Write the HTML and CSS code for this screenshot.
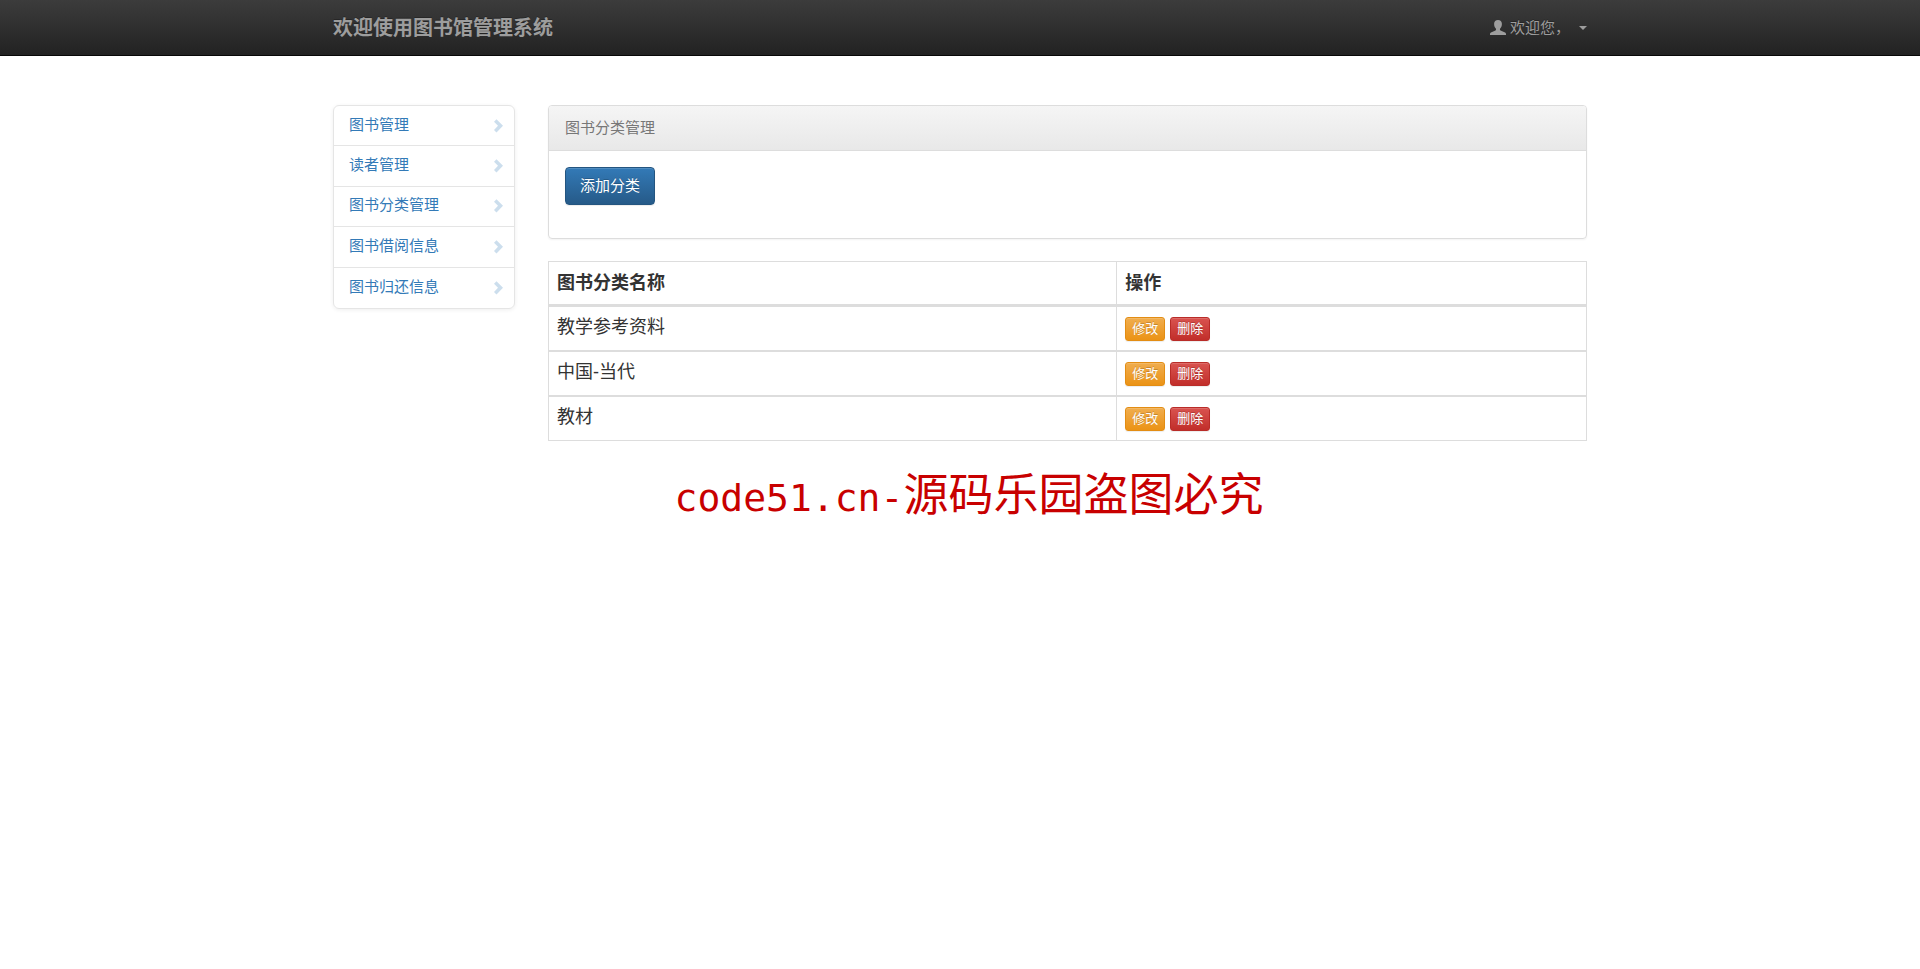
FILE: index.html
```html
<!DOCTYPE html>
<html lang="zh-CN">
<head>
<meta charset="utf-8">
<meta name="viewport" content="width=device-width, initial-scale=1">
<title>图书分类管理</title>
<link rel="stylesheet" href="styles.css">
</head>
<body>
<svg class="sprite" aria-hidden="true">
  <symbol id="chevron" viewBox="0 0 9 14"><path d="M2.5 0.2 9 6.8 2.5 13.4 0 10.9 4 6.8 0 2.7z"/></symbol>
</svg>
<header class="navbar">
  <div class="container navbar-inner">
    <a class="brand" href="#">欢迎使用图书馆管理系统</a>
    <button class="user-menu" type="button" aria-haspopup="true">
      <svg class="user-icon" viewBox="0 0 16 15" aria-hidden="true"><path d="M8 0C5.600 0 4.100 1.500 4.100 3.800c0 1.900.5 3.600 1.700 4.700.4.400.4 1.500-.3 1.900L1.500 12.200C.6 12.600 0 13.200 0 14v1h16v-1c0-.8-.6-1.400-1.500-1.800l-4-1.800c-.7-.4-.7-1.500-.3-1.900 1.200-1.100 1.700-2.800 1.700-4.700C11.900 1.500 10.400 0 8 0z"/></svg>
      <span>欢迎您，</span>
      <span class="caret"></span>
    </button>
  </div>
</header>
<div class="container layout">
  <nav class="side-nav">
    <a href="#"><span class="label">图书管理</span><svg class="chevron" aria-hidden="true"><use href="#chevron"/></svg></a>
    <a href="#"><span class="label">读者管理</span><svg class="chevron" aria-hidden="true"><use href="#chevron"/></svg></a>
    <a href="#"><span class="label">图书分类管理</span><svg class="chevron" aria-hidden="true"><use href="#chevron"/></svg></a>
    <a href="#"><span class="label">图书借阅信息</span><svg class="chevron" aria-hidden="true"><use href="#chevron"/></svg></a>
    <a href="#"><span class="label">图书归还信息</span><svg class="chevron" aria-hidden="true"><use href="#chevron"/></svg></a>
  </nav>
  <main class="main">
    <section class="panel">
      <div class="panel-heading">图书分类管理</div>
      <div class="panel-body"><button class="btn btn-primary" type="button">添加分类</button></div>
    </section>
    <table class="table">
      <thead>
        <tr><th class="name-col" scope="col">图书分类名称</th><th scope="col">操作</th></tr>
      </thead>
      <tbody>
        <tr><td>教学参考资料</td><td><div class="actions"><button class="btn btn-small btn-warning" type="button">修改</button><button class="btn btn-small btn-danger" type="button">删除</button></div></td></tr>
        <tr><td>中国-当代</td><td><div class="actions"><button class="btn btn-small btn-warning" type="button">修改</button><button class="btn btn-small btn-danger" type="button">删除</button></div></td></tr>
        <tr><td>教材</td><td><div class="actions"><button class="btn btn-small btn-warning" type="button">修改</button><button class="btn btn-small btn-danger" type="button">删除</button></div></td></tr>
      </tbody>
    </table>
  </main>
</div>
<p class="notice"><span class="notice-site">code51.cn-</span>源码乐园盗图必究</p>
</body>
</html>
```

FILE: styles.css
```css
* { box-sizing: border-box; }

body {
  margin: 0;
  background: #fff;
  color: #333;
  font-family: "Liberation Sans", "Noto Sans CJK SC", sans-serif;
  font-size: 15px;
  line-height: 22px;
}

button { font-family: inherit; }

.sprite { display: none; }

.container {
  max-width: 1254px;
  margin: 0 auto;
}

.navbar {
  background: linear-gradient(#3c3c3c, #222);
  border-bottom: 1px solid #080808;
}

.navbar-inner {
  display: flex;
  align-items: center;
  justify-content: space-between;
  height: 55px;
}

.brand {
  padding-top: 1px;
  color: #9d9d9d;
  font-size: 20px;
  font-weight: bold;
  text-decoration: none;
  text-shadow: 0 -1px 0 rgba(0, 0, 0, 0.25);
}

.user-menu {
  display: flex;
  align-items: center;
  gap: 4px;
  padding: 0;
  border: 0;
  background: none;
  color: #9d9d9d;
  font-size: 15px;
  line-height: 22px;
  text-shadow: 0 -1px 0 rgba(0, 0, 0, 0.25);
}

.user-icon {
  width: 16px;
  height: 15px;
  fill: #9d9d9d;
}

.caret {
  margin-left: 5px;
  border-top: 4px solid #9d9d9d;
  border-left: 4px solid transparent;
  border-right: 4px solid transparent;
}

.layout {
  display: flex;
  align-items: flex-start;
  gap: 33px;
  padding-top: 49px;
}

.side-nav {
  display: grid;
  grid-auto-rows: 1fr;
  flex: 0 0 182px;
  min-height: 204px;
  border: 1px solid #e5e5e5;
  border-radius: 6px;
  box-shadow: 0 1px 4px rgba(0, 0, 0, 0.065);
}

.side-nav a {
  display: flex;
  align-items: center;
  justify-content: space-between;
  padding: 0 11px 0 15px;
  border-bottom: 1px solid #e5e5e5;
  color: #337ab7;
  text-decoration: none;
}

.side-nav a:last-child { border-bottom: 0; }

.label { padding-bottom: 2px; }

.chevron {
  width: 9px;
  height: 14px;
  fill: #ccdeed;
}

.main {
  flex: 1;
  min-width: 0;
}

.panel {
  margin-bottom: 22px;
  border: 1px solid #ddd;
  border-radius: 4px;
  box-shadow: 0 1px 2px rgba(0, 0, 0, 0.05);
}

.panel-heading {
  padding: 11px 16px;
  border-bottom: 1px solid #ddd;
  border-radius: 3px 3px 0 0;
  background: linear-gradient(#f5f5f5, #e8e8e8);
  color: #777;
}

.panel-body {
  display: flex;
  padding: 16px 16px 33px;
}

.btn {
  padding: 7px 14px;
  border: 1px solid;
  border-radius: 4px;
  color: #fff;
  font-size: 15px;
  line-height: 22px;
  text-shadow: 0 -1px 0 rgba(0, 0, 0, 0.2);
  box-shadow: inset 0 1px 0 rgba(255, 255, 255, 0.15), 0 1px 1px rgba(0, 0, 0, 0.075);
}

.btn-primary {
  background: linear-gradient(#337ab7, #265a88);
  border-color: #245580;
}

.btn-small {
  padding: 1px 6px;
  border-radius: 3px;
  font-size: 13px;
  line-height: 20px;
}

.btn-warning {
  background: linear-gradient(#f0ad4e, #eb9316);
  border-color: #e38d13;
}

.btn-danger {
  background: linear-gradient(#d9534f, #c12e2a);
  border-color: #b92c28;
}

.table {
  width: 100%;
  border: 1px solid #ddd;
  border-bottom: 0;
  border-spacing: 0;
  font-size: 18px;
  line-height: 24px;
}

.table th,
.table td {
  padding: 8px 8px 9px;
  border-bottom: 2px solid #ddd;
  text-align: left;
}

.table th {
  padding: 9px 8px;
  border-bottom-width: 3px;
}

.table tr > :first-child { border-right: 1px solid #ddd; }

.table tbody tr:last-child td { border-bottom-width: 1px; }

.table tbody td:first-child { vertical-align: top; }

.name-col { width: 54.800%; }

.actions {
  display: flex;
  gap: 5px;
  padding-top: 2px;
}

.notice {
  margin: 0;
  padding: 22px 0 0 18px;
  color: #c80000;
  font-size: 45px;
  line-height: 66px;
  text-align: center;
}

.notice-site {
  font-family: "DejaVu Sans Mono", monospace;
  font-size: 38px;
}
```
